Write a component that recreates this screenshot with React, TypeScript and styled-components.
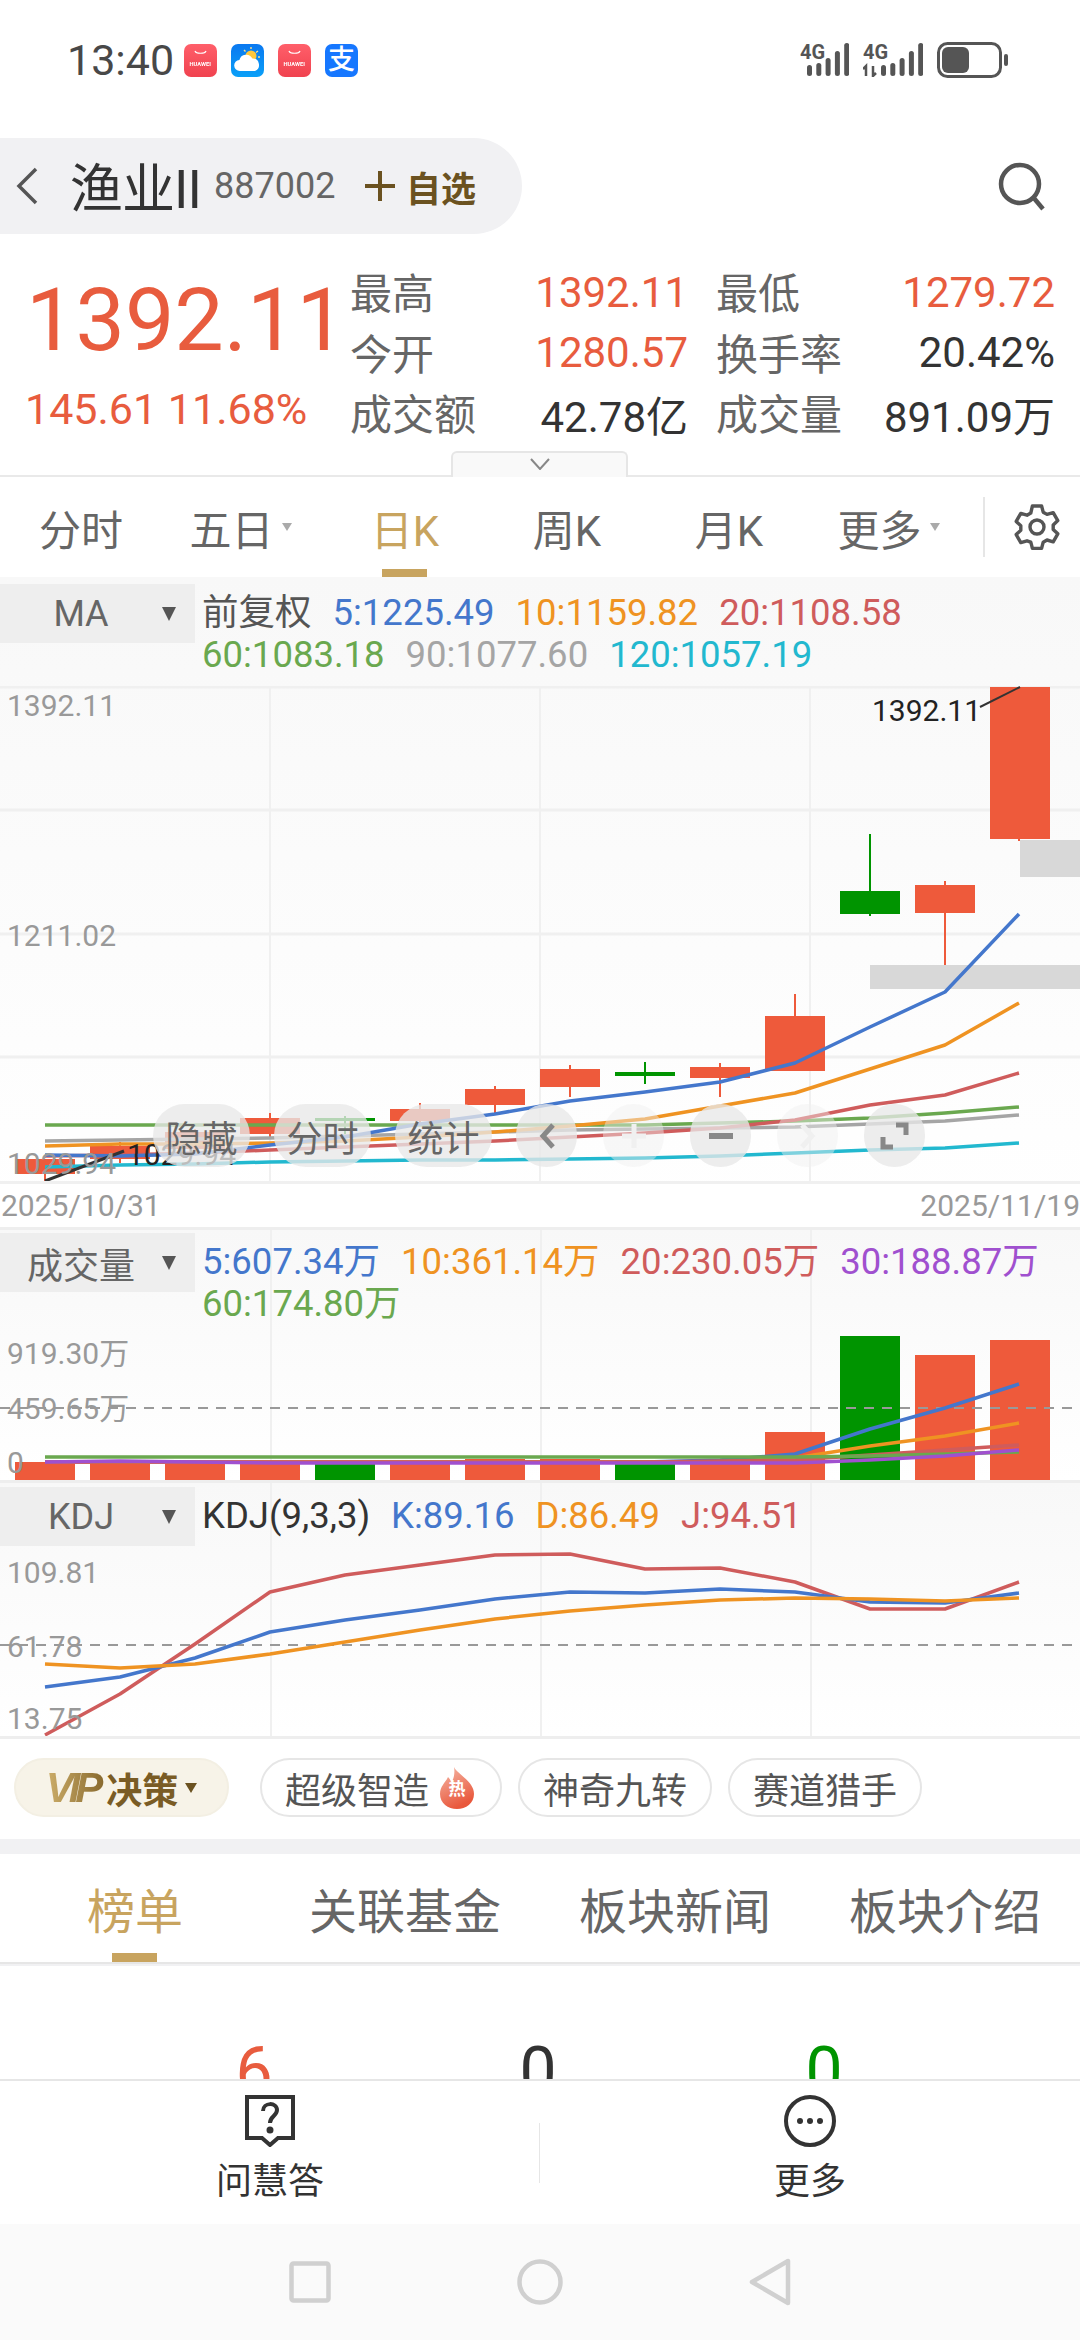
import React from 'react';
import styled, { createGlobalStyle } from 'styled-components';

const RED = '#ee5a3b';
const TEXT_RED = '#e85c3e';
const GREEN = '#009400';
const GOLD = '#c8a45f';
const BLUE = '#4477cc';
const ORANGE = '#ef9322';
const ROSE = '#cf5c5c';
const LEAF = '#6aa84f';
const GREY = '#a5a5a5';
const TEAL = '#22b8cf';
const PURPLE = '#a050cf';

const GlobalStyle = createGlobalStyle`
  html, body {
    margin: 0;
    padding: 0;
    background: #fff;
    font-family: Roboto, "Noto Sans CJK SC", sans-serif;
  }
  * { box-sizing: border-box; }
`;

const Page = styled.div`
  width: 1080px;
  height: 2340px;
  overflow: hidden;
  display: flex;
  flex-direction: column;
  background: #fff;
  color: #333;
`;

const StatusBar = styled.div`
  height: 138px;
  padding: 37px 72px 0 67px;
  display: flex;
  align-items: flex-start;
`;

const Clock = styled.span`
  font-size: 43px;
  line-height: 46px;
  color: #484848;
  width: 117px;
`;

const AppIcons = styled.div`
  display: flex;
  gap: 14px;
  margin-top: 7px;
`;

const AppIcon = styled.div<{ $bg: string }>`
  width: 33px;
  height: 33px;
  border-radius: 7px;
  background: ${(p) => p.$bg};
  position: relative;
  display: flex;
  align-items: center;
  justify-content: center;
  overflow: hidden;
  color: #fff;
`;

const HuaweiSmile = styled.svg`
  position: absolute;
  left: 0;
  top: 0;
`;

const HuaweiLabel = styled.span`
  font-size: 6px;
  line-height: 6px;
  font-weight: 700;
  margin-top: 6px;
  transform: scaleX(0.95);
`;

const AlipayChar = styled.span`
  font-size: 27px;
  line-height: 33px;
  font-weight: 500;
`;

const StatusRight = styled.div`
  margin-left: auto;
  display: flex;
  align-items: center;
  gap: 14px;
  height: 46px;
`;

const HeaderRow = styled.div`
  height: 96px;
  display: flex;
  align-items: center;
  justify-content: space-between;
  padding-right: 33px;
`;

const TitlePill = styled.div`
  width: 522px;
  height: 96px;
  background: #f1f1f3;
  border-radius: 0 48px 48px 0;
  display: flex;
  align-items: center;
  padding-left: 15px;
`;

const Title = styled.span`
  font-size: 53px;
  margin-left: 31px;
  margin-top: -2px;
  color: #333;
  width: 144px;
  letter-spacing: -1px;
  white-space: nowrap;
`;

const Code = styled.span`
  font-size: 36px;
  color: #666;
  width: 151px;
`;

const Follow = styled.span`
  font-size: 35px;
  font-weight: 700;
  color: #6b5220;
  display: flex;
  align-items: center;
  gap: 11px;
  white-space: nowrap;
`;

const QuoteRow = styled.div`
  height: 243px;
  position: relative;
  display: flex;
  padding-top: 28px;
  border-bottom: 2px solid #e9e9e9;
`;

const PriceBlock = styled.div`
  width: 350px;
  padding-left: 25px;
  color: ${TEXT_RED};
`;

const BigPrice = styled.div`
  font-size: 88px;
  line-height: 90px;
  margin-top: 13px;
  margin-left: 1px;
  white-space: nowrap;
`;

const PriceChange = styled.div`
  font-size: 43px;
  line-height: 44px;
  margin-top: 22px;
  white-space: nowrap;
`;

const StatGrid = styled.div`
  display: grid;
  grid-template-columns: 338px 339px;
  grid-auto-rows: 60.5px;
  column-gap: 28px;
`;

const Stat = styled.div`
  display: flex;
  justify-content: space-between;
  align-items: center;
  font-size: 42px;
`;

const StatLabel = styled.span`
  color: #666;
  margin-top: -3px;
`;

const StatValue = styled.span<{ $up?: boolean }>`
  color: ${(p) => (p.$up ? TEXT_RED : '#333')};
`;

const ExpandTab = styled.div`
  position: absolute;
  left: 451px;
  bottom: -2px;
  width: 177px;
  height: 26px;
  background: #f9f9f9;
  border: 2px solid #e6e6e6;
  border-bottom: none;
  border-radius: 6px 6px 0 0;
  display: flex;
  justify-content: center;
  padding-top: 5px;
`;

const PeriodBar = styled.div`
  height: 100px;
  display: grid;
  grid-template-columns: repeat(6, 162px) 1fr;
  align-items: center;
  position: relative;
`;

const Period = styled.div<{ $active?: boolean }>`
  height: 100px;
  display: flex;
  align-items: center;
  justify-content: center;
  gap: 8px;
  font-size: 42px;
  position: relative;
  color: ${(p) => (p.$active ? GOLD : '#666')};
`;

const Caret = styled.span`
  width: 0;
  height: 0;
  margin-right: 5px;
  border-left: 5px solid transparent;
  border-right: 5px solid transparent;
  border-top: 8px solid #aaa;
`;

const PeriodMark = styled.span`
  position: absolute;
  left: 50%;
  bottom: 0;
  width: 45px;
  height: 8px;
  margin-left: -23px;
  background: ${GOLD};
`;

const GearSlot = styled.div`
  height: 60px;
  border-left: 2px solid #e6e6e6;
  margin-left: 11px;
  display: flex;
  align-items: center;
  padding-left: 28px;
`;

const vertical = (x: number) =>
  `linear-gradient(#f0f0f0, #f0f0f0) ${x}px 0 / 2px 100% no-repeat`;

const Pane = styled.section<{ $h: number; $grid?: boolean }>`
  height: ${(p) => p.$h}px;
  flex: none;
  display: flex;
  flex-direction: column;
  background: ${(p) => (p.$grid ? `${vertical(270)}, ${vertical(540)}, ${vertical(810)}, ` : '')}
    linear-gradient(#f8f8f8, #ffffff);
`;

const PaneHead = styled.div<{ $h: number; $pad: number }>`
  height: ${(p) => p.$h}px;
  flex: none;
  display: flex;
  align-items: flex-start;
  padding-top: ${(p) => p.$pad}px;
`;

const Picker = styled.div`
  width: 195px;
  height: 59px;
  flex: none;
  background: #eeeeee;
  display: flex;
  align-items: center;
  font-size: 36px;
  color: #666;
`;

const PickerName = styled.span`
  width: 162px;
  text-align: center;
`;

const PickerCaret = styled.span`
  width: 0;
  height: 0;
  border-left: 7px solid transparent;
  border-right: 7px solid transparent;
  border-top: 14px solid #555;
`;

const Legend = styled.div`
  margin-left: 7px;
  margin-top: 8px;
  display: flex;
  flex-wrap: wrap;
  column-gap: 21px;
  font-size: 36.5px;
  line-height: 42px;
`;

const LegendItem = styled.span<{ $color: string }>`
  color: ${(p) => p.$color};
  white-space: nowrap;
`;

const Plot = styled.div<{ $h: number }>`
  position: relative;
  height: ${(p) => p.$h}px;
  flex: none;
  svg {
    display: block;
  }
`;

const AxisLabel = styled.span<{ $y: number; $dark?: boolean; $x?: number }>`
  position: absolute;
  left: ${(p) => p.$x ?? 7}px;
  top: ${(p) => p.$y - 20}px;
  font-size: 30px;
  line-height: 40px;
  color: ${(p) => (p.$dark ? '#222' : '#999')};
  white-space: nowrap;
`;

const DateRow = styled.div`
  height: 46px;
  display: flex;
  justify-content: space-between;
  align-items: center;
  font-size: 30px;
  color: #999;
  background: #fff;
  border-top: 3px solid #f0f0f0;
  padding-left: 1px;
`;

const OverlayRow = styled.div`
  position: absolute;
  left: 153px;
  top: 418px;
  display: flex;
  gap: 24px;
`;

const OverlayIcons = styled.div`
  display: flex;
  gap: 26px;
`;

const OverlayPill = styled.div<{ $w: number; $faint?: boolean }>`
  width: ${(p) => p.$w}px;
  height: 63px;
  border-radius: 32px;
  background: ${(p) => (p.$faint ? 'rgba(240, 240, 240, 0.45)' : 'rgba(232, 232, 232, 0.78)')};
  display: flex;
  align-items: center;
  justify-content: center;
  font-size: 36px;
  color: #666;
`;

const Divider = styled.div`
  height: 3px;
  background: #eeeeee;
  flex: none;
`;

const ToolBar = styled.div`
  height: 103px;
  flex: none;
  border-top: 3px solid #eeeeee;
  display: flex;
  align-items: flex-start;
  padding: 19px 0 0 14px;
`;

const VipChip = styled.div`
  width: 215px;
  height: 59px;
  border-radius: 30px;
  background: #f7f3e8;
  border: 2px solid #f3efe3;
  display: flex;
  align-items: center;
  justify-content: center;
  margin-right: 31px;
`;

const VipMark = styled.span`
  font-family: "Liberation Sans", sans-serif;
  font-style: italic;
  font-weight: 700;
  font-size: 42px;
  letter-spacing: -5px;
  padding-right: 8px;
  background: linear-gradient(90deg, #cdae6a, #86672c);
  -webkit-background-clip: text;
  background-clip: text;
  color: transparent;
`;

const VipText = styled.span`
  font-size: 36px;
  font-weight: 700;
  color: #7a5c25;
`;

const VipCaret = styled.span`
  width: 0;
  height: 0;
  margin-left: 7px;
  border-left: 6px solid transparent;
  border-right: 6px solid transparent;
  border-top: 10px solid #6b5220;
`;

const Chip = styled.div<{ $w: number }>`
  width: ${(p) => p.$w}px;
  height: 59px;
  border-radius: 30px;
  border: 2px solid #e6e6e6;
  display: flex;
  align-items: center;
  justify-content: center;
  gap: 8px;
  font-size: 36px;
  color: #555;
  margin-right: 16px;
`;

const HotBadge = styled.span`
  width: 40px;
  height: 44px;
  position: relative;
  display: flex;
  align-items: center;
  justify-content: center;
  font-size: 17px;
  font-weight: 700;
  color: #fff;
  span {
    position: relative;
  }
  svg {
    position: absolute;
    left: 0;
    top: 0;
  }
`;

const GreyBand = styled.div`
  height: 15px;
  flex: none;
  background: #f1f1f3;
`;

const SectionTabs = styled.div`
  height: 110px;
  flex: none;
  display: grid;
  grid-template-columns: repeat(4, 270px);
  border-bottom: 2px solid #e6e6e6;
  position: relative;
  box-shadow: 0 2px 0 #f1f1f3;
`;

const SectionTab = styled.div<{ $active?: boolean }>`
  display: flex;
  align-items: flex-start;
  justify-content: center;
  padding-top: 27px;
  font-size: 48px;
  line-height: 64px;
  color: ${(p) => (p.$active ? GOLD : '#666')};
  position: relative;
`;

const SectionMark = styled.span`
  position: absolute;
  left: 112px;
  bottom: 0;
  width: 45px;
  height: 9px;
  background: ${GOLD};
`;

const Counts = styled.div`
  flex: 1;
  overflow: hidden;
  position: relative;
`;

const Count = styled.span<{ $x: number; $color: string }>`
  position: absolute;
  left: ${(p) => p.$x}px;
  top: 72px;
  width: 80px;
  margin-left: -40px;
  text-align: center;
  font-size: 66px;
  line-height: 72px;
  color: ${(p) => p.$color};
`;

const ActionBar = styled.div`
  height: 145px;
  flex: none;
  border-top: 2px solid #e6e6e6;
  background: #fff;
  display: grid;
  grid-template-columns: 540px 540px;
`;

const Action = styled.div<{ $divided?: boolean }>`
  display: flex;
  flex-direction: column;
  align-items: center;
  padding-top: 14px;
  font-size: 36px;
  line-height: 46px;
  color: #333;
  position: relative;
  ${(p) =>
    p.$divided &&
    `&::after {
      content: '';
      position: absolute;
      right: 0;
      top: 42px;
      height: 60px;
      width: 1px;
      background: #e6e6e6;
    }`}
`;

const ActionIcon = styled.div`
  height: 54px;
  margin-bottom: 10px;
`;

const NavBar = styled.div`
  height: 116px;
  flex: none;
  background: #fafafa;
  display: flex;
  align-items: center;
  justify-content: center;
  gap: 186px;
  padding-bottom: 1px;
`;

type Pt = [number, number];
const XS = [45, 120, 195, 270, 345, 420, 495, 570, 645, 720, 795, 870, 945, 1019];

const series = (ys: number[]): Pt[] => ys.map((y, i) => [XS[i], y]);

const Line = ({ pts, top, color, w = 3.5 }: { pts: Pt[]; top: number; color: string; w?: number }) => (
  <polyline
    points={pts.map(([x, y]) => `${x},${y - top}`).join(' ')}
    fill="none"
    stroke={color}
    strokeWidth={w}
    strokeLinejoin="round"
  />
);

// body and wick in page pixels: top, bottom, wickTop, wickBottom, up
const CANDLES: [number, number, number, number, boolean][] = [
  [1160, 1175, 1160, 1183, true],
  [1147, 1160, 1143, 1164, true],
  [1133, 1150, 1130, 1152, true],
  [1119, 1135, 1114, 1140, true],
  [1119, 1122, 1117, 1135, false],
  [1110, 1122, 1104, 1127, true],
  [1090, 1106, 1087, 1115, true],
  [1070, 1088, 1066, 1098, true],
  [1073, 1077, 1063, 1085, false],
  [1068, 1079, 1064, 1098, true],
  [1017, 1072, 995, 1072, true],
  [892, 915, 835, 917, false],
  [886, 914, 882, 966, true],
  [688, 840, 688, 842, true],
];

const MA_LINES: [string, number[]][] = [
  [TEAL, [1168, 1166, 1165, 1163, 1162, 1161, 1161, 1160, 1159, 1157, 1154, 1151, 1149, 1144]],
  [GREY, [1142, 1141, 1140, 1139, 1137, 1135, 1133, 1131, 1130, 1129, 1128, 1125, 1122, 1116]],
  [LEAF, [1126, 1126, 1126, 1126, 1126, 1126, 1126, 1126, 1126, 1124, 1122, 1119, 1114, 1108]],
  [ROSE, [1157, 1156, 1154, 1151, 1148, 1145, 1142, 1138, 1134, 1129, 1121, 1106, 1096, 1074]],
  [ORANGE, [1147, 1145, 1145, 1144, 1142, 1138, 1133, 1127, 1120, 1107, 1094, 1070, 1046, 1004]],
  [BLUE, [1156, 1157, 1155, 1146, 1138, 1125, 1115, 1102, 1093, 1083, 1064, 1028, 993, 915]],
];

const VOLUMES: [number, boolean][] = [
  [1463, true], [1463, true], [1463, true], [1463, true], [1465, false], [1464, true], [1460, true],
  [1460, true], [1461, false], [1461, true], [1433, true], [1337, false], [1356, true], [1341, true],
];

const VOL_LINES: [string, number[]][] = [
  [BLUE, [1463, 1463, 1463, 1463, 1463, 1463, 1463, 1463, 1463, 1461, 1455, 1430, 1409, 1385]],
  [ORANGE, [1463, 1463, 1463, 1463, 1463, 1463, 1463, 1463, 1463, 1463, 1459, 1447, 1437, 1424]],
  [ROSE, [1463, 1463, 1463, 1463, 1463, 1463, 1463, 1463, 1463, 1462, 1461, 1456, 1451, 1446]],
  [LEAF, [1458, 1458, 1458, 1458, 1458, 1458, 1458, 1458, 1458, 1458, 1458, 1457, 1455, 1453]],
  [PURPLE, [1463, 1462, 1463, 1464, 1464, 1464, 1464, 1464, 1464, 1464, 1464, 1461, 1457, 1451]],
];

const KDJ_LINES: [string, number[]][] = [
  [ROSE, [1736, 1695, 1645, 1593, 1576, 1566, 1556, 1555, 1570, 1569, 1583, 1610, 1610, 1583]],
  [BLUE, [1688, 1678, 1659, 1633, 1621, 1611, 1600, 1593, 1594, 1590, 1593, 1603, 1604, 1594]],
  [ORANGE, [1665, 1669, 1665, 1655, 1643, 1631, 1620, 1612, 1606, 1601, 1599, 1600, 1602, 1599]],
];

const MA_TOP = 687;
const VOL_TOP = 1328;
const KDJ_TOP = 1550;

const MaPlot = () => (
  <svg width="1080" height="495" viewBox="0 0 1080 495">
    {[1, 124, 248, 371].map((y) => (
      <line key={y} x1="0" x2="1080" y1={y} y2={y} stroke="#f0f0f0" strokeWidth="3" />
    ))}
    {[270, 540, 810].map((x) => (
      <line key={x} x1={x} x2={x} y1="0" y2="495" stroke="#f0f0f0" strokeWidth="2" />
    ))}
    {CANDLES.map(([t, b, wt, wb, up], i) => {
      const color = up ? RED : GREEN;
      return (
        <g key={i} fill={color}>
          <rect x={XS[i] - 1} y={wt - MA_TOP} width="2" height={wb - wt} />
          <rect x={15 + i * 75} y={t - MA_TOP} width="60" height={b - t} />
        </g>
      );
    })}
    <rect x="1020" y={841 - MA_TOP} width="60" height="37" fill="#d8d8d8" />
    <rect x="870" y={966 - MA_TOP} width="210" height="24" fill="#d8d8d8" />
    {MA_LINES.map(([color, ys]) => (
      <Line key={color} pts={series(ys)} top={MA_TOP} color={color} />
    ))}
    <line x1="980" y1="21" x2="1020" y2="1" stroke="#333" strokeWidth="2" />
    <line x1="45" y1={1182 - MA_TOP} x2="124" y2={1152 - MA_TOP} stroke="#333" strokeWidth="3" />
  </svg>
);

const VolPlot = () => (
  <svg width="1080" height="153" viewBox="0 0 1080 153">
    {VOLUMES.map(([t, up], i) => (
      <rect key={i} x={15 + i * 75} y={t - VOL_TOP} width="60" height={1481 - t} fill={up ? RED : GREEN} />
    ))}
    <line x1="0" x2="1080" y1={1409 - VOL_TOP} y2={1409 - VOL_TOP} stroke="#999" strokeWidth="2" strokeDasharray="10 8" />
    {VOL_LINES.map(([color, ys]) => (
      <Line key={color} pts={series(ys)} top={VOL_TOP} color={color} />
    ))}
  </svg>
);

const KdjPlot = () => (
  <svg width="1080" height="187" viewBox="0 0 1080 187">
    <line x1="0" x2="1080" y1={1646 - KDJ_TOP} y2={1646 - KDJ_TOP} stroke="#999" strokeWidth="2" strokeDasharray="10 8" />
    {KDJ_LINES.map(([color, ys]) => (
      <Line key={color} pts={series(ys)} top={KDJ_TOP} color={color} />
    ))}
  </svg>
);

const BAR_TOPS = [22, 20, 15, 8, 0];

const Signal = ({ roaming }: { roaming?: boolean }) => (
  <svg width={roaming ? 60 : 49} height="34" viewBox={`0 0 ${roaming ? 60 : 49} 34`} fill="#555">
    <text x="0" y="16" fontSize="20" fontWeight="700" fontFamily="Roboto, sans-serif">4G</text>
    {roaming && (
      <path d="M3 33V23l-3 3M3 23M10 23v10l3-3" fill="none" stroke="#555" strokeWidth="2.500" />
    )}
    {BAR_TOPS.map((t, i) => (
      <rect key={i} x={(roaming ? 18 : 7) + i * 9.300} y={t} width="5" height={33 - t} rx="2.500" />
    ))}
  </svg>
);

const HuaweiIcon = () => (
  <AppIcon $bg="linear-gradient(#ff5f6a, #f0424f)">
    <HuaweiSmile width="33" height="33" viewBox="0 0 33 33">
      <path d="M11 7c1 3 10 3 11 0" stroke="#fff" strokeWidth="1.200" fill="none" />
    </HuaweiSmile>
    <HuaweiLabel>HUAWEI</HuaweiLabel>
  </AppIcon>
);

const App = () => {
  return (
    <Page>
      <GlobalStyle />
      <StatusBar>
        <Clock>13:40</Clock>
        <AppIcons>
          <HuaweiIcon />
          <AppIcon $bg="linear-gradient(#0a78f0, #0aa0f8)">
            <svg width="33" height="33" viewBox="0 0 33 33">
              <circle cx="20" cy="12" r="5.500" fill="#ffc83c" />
              <path d="M20 3v2M27 7l-2 1.500M13 6l1.500 1.500M29 13h-2" stroke="#ffe08a" strokeWidth="1.400" />
              <path d="M9 27a5.500 5.500 0 0 1-.6-11 7 7 0 0 1 13-1.500 6.500 6.500 0 0 1 2.600 12.500z" fill="#fff" />
            </svg>
          </AppIcon>
          <HuaweiIcon />
          <AppIcon $bg="#1677ff">
            <AlipayChar>支</AlipayChar>
          </AppIcon>
        </AppIcons>
        <StatusRight>
          <Signal />
          <Signal roaming />
          <svg width="71" height="36" viewBox="0 0 71 36">
            <rect x="1.500" y="1.500" width="62" height="33" rx="9" fill="none" stroke="#555" strokeWidth="3" />
            <rect x="5" y="5" width="27" height="26" rx="6" fill="#555" />
            <rect x="67" y="12" width="4" height="12" rx="2" fill="#555" />
          </svg>
        </StatusRight>
      </StatusBar>

      <HeaderRow>
        <TitlePill>
          <svg width="24" height="38" viewBox="0 0 24 38" fill="none" stroke="#555" strokeWidth="3.500">
            <path d="M21 2 4 19l17 17" />
          </svg>
          <Title>渔业II</Title>
          <Code>887002</Code>
          <Follow>
            <svg width="30" height="30" viewBox="0 0 30 30" stroke="#6b5220" strokeWidth="4">
              <path d="M15 0v30M0 15h30" />
            </svg>
            自选
          </Follow>
        </TitlePill>
        <svg width="50" height="50" viewBox="0 0 50 50" fill="none" stroke="#555" strokeWidth="4.500">
          <circle cx="23" cy="23" r="19" />
          <path d="M36 36l10 12" />
        </svg>
      </HeaderRow>

      <QuoteRow>
        <PriceBlock>
          <BigPrice>1392.11</BigPrice>
          <PriceChange>145.61 11.68%</PriceChange>
        </PriceBlock>
        <StatGrid>
          <Stat><StatLabel>最高</StatLabel><StatValue $up>1392.11</StatValue></Stat>
          <Stat><StatLabel>最低</StatLabel><StatValue $up>1279.72</StatValue></Stat>
          <Stat><StatLabel>今开</StatLabel><StatValue $up>1280.57</StatValue></Stat>
          <Stat><StatLabel>换手率</StatLabel><StatValue>20.42%</StatValue></Stat>
          <Stat><StatLabel>成交额</StatLabel><StatValue>42.78亿</StatValue></Stat>
          <Stat><StatLabel>成交量</StatLabel><StatValue>891.09万</StatValue></Stat>
        </StatGrid>
        <ExpandTab>
          <svg width="20" height="12" viewBox="0 0 20 12" fill="none" stroke="#888" strokeWidth="2">
            <path d="M1 1l9 10 9-10" />
          </svg>
        </ExpandTab>
      </QuoteRow>

      <PeriodBar>
        <Period>分时</Period>
        <Period>五日<Caret /></Period>
        <Period $active>日K<PeriodMark /></Period>
        <Period>周K</Period>
        <Period>月K</Period>
        <Period>更多<Caret /></Period>
        <GearSlot>
          <svg width="48" height="50" viewBox="0 0 24 24" fill="none" stroke="#555" strokeWidth="1.700" strokeLinejoin="round">
            <path d="M9.700 1.500h4.600l.8 3.100 1.900 1.100 3.100-.9 2.300 4-2.300 2.200v2.200l2.300 2.200-2.300 4-3.100-.9-1.900 1.100-.8 3.100H9.700l-.8-3.100L7 18.900l-3.100.9-2.300-4 2.300-2.200v-2.200L1.600 9.200l2.300-4 3.100.9 1.900-1.100z" />
            <circle cx="12" cy="12" r="3.500" />
          </svg>
        </GearSlot>
      </PeriodBar>

      <Pane $h={650}>
        <PaneHead $h={109} $pad={7}>
          <Picker><PickerName>MA</PickerName><PickerCaret /></Picker>
          <Legend>
            <LegendItem $color="#555">前复权</LegendItem>
            <LegendItem $color={BLUE}>5:1225.49</LegendItem>
            <LegendItem $color={ORANGE}>10:1159.82</LegendItem>
            <LegendItem $color={ROSE}>20:1108.58</LegendItem>
            <LegendItem $color={LEAF}>60:1083.18</LegendItem>
            <LegendItem $color={GREY}>90:1077.60</LegendItem>
            <LegendItem $color={TEAL}>120:1057.19</LegendItem>
          </Legend>
        </PaneHead>
        <Plot $h={495}>
          <MaPlot />
          <AxisLabel $y={20}>1392.11</AxisLabel>
          <AxisLabel $y={250}>1211.02</AxisLabel>
          <AxisLabel $y={478}>1029.94</AxisLabel>
          <AxisLabel $y={25} $x={872} $dark>1392.11</AxisLabel>
          <AxisLabel $y={469} $x={127} $dark>1029.94</AxisLabel>
          <OverlayRow>
            <OverlayPill $w={97}>隐藏</OverlayPill>
            <OverlayPill $w={97}>分时</OverlayPill>
            <OverlayPill $w={97}>统计</OverlayPill>
            <OverlayIcons>
              <OverlayPill $w={61}>
                <svg width="18" height="26" viewBox="0 0 18 26" fill="none" stroke="#888" strokeWidth="5"><path d="M15 2 5 13l10 11" /></svg>
              </OverlayPill>
              <OverlayPill $w={61} $faint>
                <svg width="24" height="24" viewBox="0 0 24 24" stroke="#f0f0f0" strokeWidth="5"><path d="M12 0v24M0 12h24" /></svg>
              </OverlayPill>
              <OverlayPill $w={61}>
                <svg width="24" height="6" viewBox="0 0 24 6"><rect width="24" height="6" fill="#888" /></svg>
              </OverlayPill>
              <OverlayPill $w={61} $faint>
                <svg width="18" height="26" viewBox="0 0 18 26" fill="none" stroke="#f0f0f0" strokeWidth="5"><path d="M3 2l10 11L3 24" /></svg>
              </OverlayPill>
              <OverlayPill $w={61}>
                <svg width="29" height="28" viewBox="0 0 29 28" fill="none" stroke="#888" strokeWidth="5"><path d="M16 3h10v10M13 25H3V15" /></svg>
              </OverlayPill>
            </OverlayIcons>
          </OverlayRow>
        </Plot>
        <DateRow>
          <span>2025/10/31</span>
          <span>2025/11/19</span>
        </DateRow>
      </Pane>

      <Divider />
      <Pane $h={250} $grid>
        <PaneHead $h={97} $pad={3}>
          <Picker><PickerName>成交量</PickerName><PickerCaret /></Picker>
          <Legend>
            <LegendItem $color={BLUE}>5:607.34万</LegendItem>
            <LegendItem $color={ORANGE}>10:361.14万</LegendItem>
            <LegendItem $color={ROSE}>20:230.05万</LegendItem>
            <LegendItem $color={PURPLE}>30:188.87万</LegendItem>
            <LegendItem $color={LEAF}>60:174.80万</LegendItem>
          </Legend>
        </PaneHead>
        <Plot $h={153}>
          <VolPlot />
          <AxisLabel $y={27}>919.30万</AxisLabel>
          <AxisLabel $y={82}>459.65万</AxisLabel>
          <AxisLabel $y={136}>0</AxisLabel>
        </Plot>
      </Pane>

      <Divider />
      <Pane $h={253} $grid>
        <PaneHead $h={66} $pad={4}>
          <Picker><PickerName>KDJ</PickerName><PickerCaret /></Picker>
          <Legend>
            <LegendItem $color="#333">KDJ(9,3,3)</LegendItem>
            <LegendItem $color={BLUE}>K:89.16</LegendItem>
            <LegendItem $color={ORANGE}>D:86.49</LegendItem>
            <LegendItem $color={ROSE}>J:94.51</LegendItem>
          </Legend>
        </PaneHead>
        <Plot $h={187}>
          <KdjPlot />
          <AxisLabel $y={24}>109.81</AxisLabel>
          <AxisLabel $y={98}>61.78</AxisLabel>
          <AxisLabel $y={170}>13.75</AxisLabel>
        </Plot>
      </Pane>

      <ToolBar>
        <VipChip>
          <VipMark>VIP</VipMark>
          <VipText>决策</VipText>
          <VipCaret />
        </VipChip>
        <Chip $w={242}>
          超级智造
          <HotBadge>
            <svg width="40" height="44" viewBox="0 0 40 44">
              <defs>
                <linearGradient id="flame" x1="0" y1="0" x2="0.4" y2="1">
                  <stop offset="0" stopColor="#f5b9a8" />
                  <stop offset="1" stopColor="#e9583c" />
                </linearGradient>
              </defs>
              <path d="M17 1c3 7 20 14 20 27 0 9-8 15-17 15S3 37 3 28c0-8 6-12 8-17 2 2 3 4 3 6 3-4 4-10 3-16z" fill="url(#flame)" />
            </svg>
            <span>热</span>
          </HotBadge>
        </Chip>
        <Chip $w={194}>神奇九转</Chip>
        <Chip $w={194}>赛道猎手</Chip>
      </ToolBar>

      <GreyBand />

      <SectionTabs>
        <SectionTab $active>榜单<SectionMark /></SectionTab>
        <SectionTab>关联基金</SectionTab>
        <SectionTab>板块新闻</SectionTab>
        <SectionTab>板块介绍</SectionTab>
      </SectionTabs>

      <Counts>
        <Count $x={254} $color={TEXT_RED}>6</Count>
        <Count $x={538} $color="#333">0</Count>
        <Count $x={824} $color={GREEN}>0</Count>
      </Counts>

      <ActionBar>
        <Action $divided>
          <ActionIcon>
            <svg width="50" height="52" viewBox="0 0 50 52" fill="none" stroke="#333" strokeWidth="4">
              <path d="M2 2h46v41H33l-8 7-8-7H2z" />
              <path d="M18 16c0-9 14-9 14-1 0 6-7 6-7 13" />
              <circle cx="25" cy="35" r="1.500" fill="#333" />
            </svg>
          </ActionIcon>
          问慧答
        </Action>
        <Action>
          <ActionIcon>
            <svg width="52" height="52" viewBox="0 0 52 52" fill="none" stroke="#333" strokeWidth="4">
              <circle cx="26" cy="26" r="24" />
              <g fill="#333" stroke="none">
                <circle cx="16" cy="26" r="3" />
                <circle cx="26" cy="26" r="3" />
                <circle cx="36" cy="26" r="3" />
              </g>
            </svg>
          </ActionIcon>
          更多
        </Action>
      </ActionBar>

      <NavBar>
        <svg width="42" height="42" viewBox="0 0 42 42" fill="none" stroke="#d0d0d0" strokeWidth="4.500">
          <rect x="2.500" y="2.500" width="37" height="37" rx="2" />
        </svg>
        <svg width="46" height="46" viewBox="0 0 46 46" fill="none" stroke="#d0d0d0" strokeWidth="4.500">
          <circle cx="23" cy="23" r="20.500" />
        </svg>
        <svg width="42" height="48" viewBox="0 0 42 48" fill="none" stroke="#d0d0d0" strokeWidth="4.500" strokeLinejoin="round">
          <path d="M39 3v42L3 24z" />
        </svg>
      </NavBar>
    </Page>
  );
};

export default App;
